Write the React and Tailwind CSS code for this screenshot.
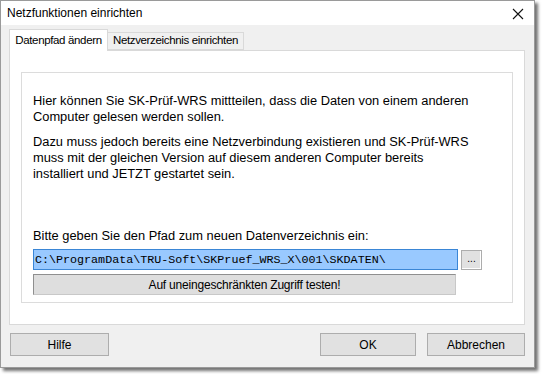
import React from 'react';

const ui = { fontFamily: '"Liberation Sans", Arial, sans-serif' };
const mono = { fontFamily: '"Liberation Mono", "Courier New", monospace' };

const DialogButton = ({ label, className = '' }) => (
  <button
    className={`h-[23px] border border-[#adadad] bg-[#e1e1e1] text-[12px] text-black ${className}`}
    style={ui}
  >
    {label}
  </button>
);

export default function App() {
  return (
    <div className="w-[542px] h-[374px] bg-white overflow-hidden" style={ui}>
      <div className="w-[535px] h-[368px] flex flex-col border border-[#9a9a9a] shadow-[3px_3px_3px_rgba(0,0,0,0.55)]">
        {/* title bar */}
        <div className="h-[24px] bg-white flex items-center justify-between pl-[6px] pr-[10px] shrink-0">
          <span className="text-[12px] text-black">Netzfunktionen einrichten</span>
          <svg width="12" height="12" viewBox="0 0 12 12" className="mt-[1px]">
            <path d="M1 1 L11 11 M11 1 L1 11" stroke="#111" strokeWidth="1.1" />
          </svg>
        </div>

        {/* body */}
        <div className="flex-1 bg-[#f0f0f0] px-[8px] pt-[4px] flex flex-col">
          {/* tabs */}
          <div className="flex items-end h-[21px] relative z-10">
            <div className="h-[22px] w-[99px] bg-white border border-[#d9d9d9] border-b-0 flex items-center justify-center whitespace-nowrap text-[11.5px] tracking-[-0.35px] -mb-[1px]">
              Datenpfad ändern
            </div>
            <div className="h-[18px] w-[136px] bg-[#f0f0f0] border border-[#d9d9d9] border-l-0 flex items-center justify-center whitespace-nowrap text-[11.5px] tracking-[-0.35px]">
              Netzverzeichnis einrichten
            </div>
          </div>

          {/* panel */}
          <div className="h-[275px] bg-white border border-[#d9d9d9] px-[11px] pt-[21px] pb-[21px] w-[516px]">
            <div className="h-full border border-[#dcdcdc] pl-[11px] pr-[10px] pt-[20px] text-[12.85px] leading-[16px] text-black">
              <div className="whitespace-nowrap">
                <p>
                  Hier können Sie SK-Prüf-WRS mittteilen, dass die Daten von einem anderen
                  <br />
                  Computer gelesen werden sollen.
                </p>
                <p className="mt-[9px]">
                  Dazu muss jedoch bereits eine Netzverbindung existieren und SK-Prüf-WRS
                  <br />
                  muss mit der gleichen Version auf diesem anderen Computer bereits
                  <br />
                  installiert und JETZT gestartet sein.
                </p>
                <p className="mt-[46px]">Bitte geben Sie den Pfad zum neuen Datenverzeichnis ein:</p>
              </div>
              <div className="flex items-center gap-[3px] mt-[5px]">
                <div className="w-[425px] h-[21px] bg-[#99c9ff] border border-[#3a86d6] flex items-center pl-[1px] text-[11.7px] text-black" style={mono}>
                  C:\ProgramData\TRU-Soft\SKPruef_WRS_X\001\SKDATEN\
                </div>
                <div className="w-[21px] h-[20px] bg-[#e1e1e1] border border-[#adadad] shadow-[inset_-1px_-1px_0_#fff] flex items-center justify-center text-[10px] leading-none pb-[2px]">
                  ...
                </div>
              </div>
              <div className="w-[423px] h-[21px] mt-[4px] bg-[#dedede] border border-[#8f8f8f] border-r-[#c8c8c8] border-b-[#c8c8c8] flex items-center justify-center text-[12px] tracking-[-0.2px]">
                Auf uneingeschränkten Zugriff testen!
              </div>
            </div>
          </div>

          {/* footer */}
          <div className="flex items-center mt-[8px] pl-[1px]">
            <DialogButton label="Hilfe" className="w-[99px]" />
            <div className="flex-1" />
            <DialogButton label="OK" className="w-[96px] mr-[11px]" />
            <DialogButton label="Abbrechen" className="w-[98px] mr-[1px]" />
          </div>
        </div>
      </div>
    </div>
  );
}
